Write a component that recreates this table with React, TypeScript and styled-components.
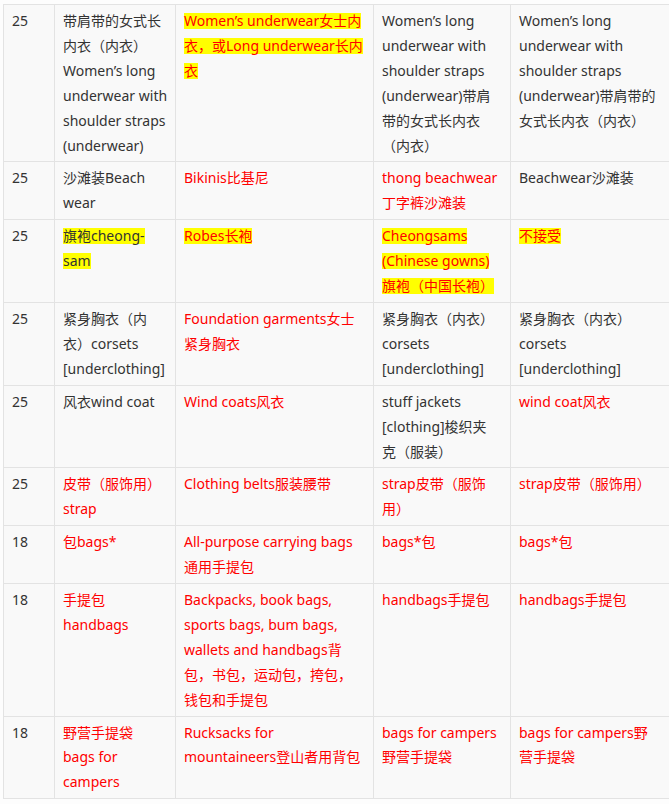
import React from "react";
import styled, { createGlobalStyle } from "styled-components";

const GlobalStyle = createGlobalStyle`
	html, body {
		margin: 0;
		padding: 0;
		background: #fdfdfd;
		overflow: hidden;
	}
	body {
		font-family: "Noto Sans", "Noto Sans CJK SC", sans-serif;
	}
`;

const Page = styled.div`
	padding: 4px 0 0 3px;
	width: 680px;
`;

const Table = styled.table`
	border-collapse: collapse;
	table-layout: fixed;
	width: 668px;
	background: #f9f9f9;
	font-size: 14px;
	line-height: 24.9px;
`;

const Col = styled.col<{ $w: number }>`
	width: ${(p) => p.$w}px;
`;

const Row = styled.tr``;

const Cell = styled.td<{ $red?: boolean }>`
	border: 1px solid #e3e3e3;
	padding: 4px 8px 3px 8px;
	vertical-align: top;
	white-space: nowrap;
	overflow: hidden;
	color: ${(p) => (p.$red ? "#ff0000" : "#333333")};
`;

const Mark = styled.span`
	background: linear-gradient(
		to bottom,
		transparent 2px,
		#ffff00 2px,
		#ffff00 18px,
		transparent 18px
	);
`;

type CellData = { lines: string[]; red?: boolean; mark?: boolean };

const colWidths = [51, 121, 198, 137, 161];

const rows: { num: string; cells: CellData[] }[] = [
	{
		num: "25",
		cells: [
			{ lines: ["带肩带的女式长", "内衣（内衣）", "Women’s long", "underwear with", "shoulder straps", "(underwear)"] },
			{ lines: ["Women’s underwear女士内", "衣，或Long underwear长内", "衣"], red: true, mark: true },
			{ lines: ["Women’s long", "underwear with", "shoulder straps", "(underwear)带肩", "带的女式长内衣", "（内衣）"] },
			{ lines: ["Women’s long", "underwear with", "shoulder straps", "(underwear)带肩带的", "女式长内衣（内衣）"] },
		],
	},
	{
		num: "25",
		cells: [
			{ lines: ["沙滩装Beach", "wear"] },
			{ lines: ["Bikinis比基尼"], red: true },
			{ lines: ["thong beachwear", "丁字裤沙滩装"], red: true },
			{ lines: ["Beachwear沙滩装"] },
		],
	},
	{
		num: "25",
		cells: [
			{ lines: ["旗袍cheong-", "sam"], mark: true },
			{ lines: ["Robes长袍"], red: true, mark: true },
			{ lines: ["Cheongsams", "(Chinese gowns)", "旗袍（中国长袍）"], red: true, mark: true },
			{ lines: ["不接受"], red: true, mark: true },
		],
	},
	{
		num: "25",
		cells: [
			{ lines: ["紧身胸衣（内", "衣）corsets", "[underclothing]"] },
			{ lines: ["Foundation garments女士", "紧身胸衣"], red: true },
			{ lines: ["紧身胸衣（内衣）", "corsets", "[underclothing]"] },
			{ lines: ["紧身胸衣（内衣）", "corsets", "[underclothing]"] },
		],
	},
	{
		num: "25",
		cells: [
			{ lines: ["风衣wind coat"] },
			{ lines: ["Wind coats风衣"], red: true },
			{ lines: ["stuff jackets", "[clothing]梭织夹", "克（服装）"] },
			{ lines: ["wind coat风衣"], red: true },
		],
	},
	{
		num: "25",
		cells: [
			{ lines: ["皮带（服饰用）", "strap"], red: true },
			{ lines: ["Clothing belts服装腰带"], red: true },
			{ lines: ["strap皮带（服饰", "用）"], red: true },
			{ lines: ["strap皮带（服饰用）"], red: true },
		],
	},
	{
		num: "18",
		cells: [
			{ lines: ["包bags*"], red: true },
			{ lines: ["All-purpose carrying bags", "通用手提包"], red: true },
			{ lines: ["bags*包"], red: true },
			{ lines: ["bags*包"], red: true },
		],
	},
	{
		num: "18",
		cells: [
			{ lines: ["手提包", "handbags"], red: true },
			{
				lines: ["Backpacks, book bags,", "sports bags, bum bags,", "wallets and handbags背", "包，书包，运动包，挎包，", "钱包和手提包"],
				red: true,
			},
			{ lines: ["handbags手提包"], red: true },
			{ lines: ["handbags手提包"], red: true },
		],
	},
	{
		num: "18",
		cells: [
			{ lines: ["野营手提袋", "bags for", "campers"], red: true },
			{ lines: ["Rucksacks for", "mountaineers登山者用背包"], red: true },
			{ lines: ["bags for campers", "野营手提袋"], red: true },
			{ lines: ["bags for campers野", "营手提袋"], red: true },
		],
	},
];

const CellText = ({ data }: { data: CellData }) => (
	<>
		{data.lines.map((line, i) => (
			<React.Fragment key={i}>
				{i > 0 && <br />}
				{data.mark ? <Mark>{line}</Mark> : line}
			</React.Fragment>
		))}
	</>
);

const App = () => {
	return (
		<Page>
			<GlobalStyle />
			<Table>
				<colgroup>
					{colWidths.map((w, i) => (
						<Col key={i} $w={w} />
					))}
				</colgroup>
				<tbody>
					{rows.map((row, r) => (
						<Row key={r}>
							<Cell>{row.num}</Cell>
							{row.cells.map((c, i) => (
								<Cell key={i} $red={c.red}>
									<CellText data={c} />
								</Cell>
							))}
						</Row>
					))}
				</tbody>
			</Table>
		</Page>
	);
};

export default App;
